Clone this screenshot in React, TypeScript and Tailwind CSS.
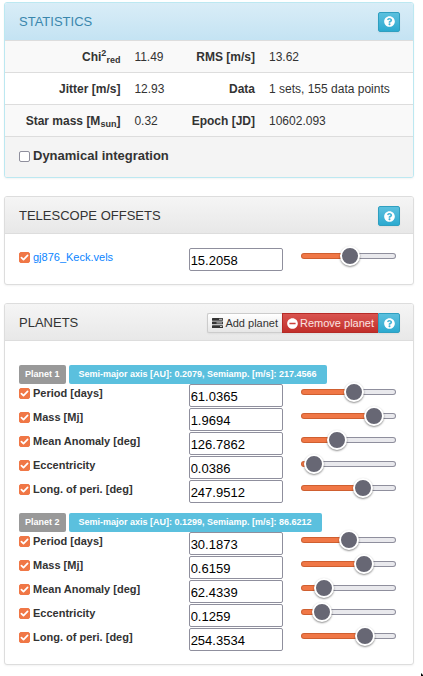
import { useState } from "react";
import type { ReactNode } from "react";
import { FaMinusCircle, FaQuestionCircle } from "react-icons/fa";

type Param = { id: string; label: string; value: string; slider: number };
type Planet = { name: string; summary: string; params: Param[] };

const PLANETS: Planet[] = [
  {
    name: "Planet 1",
    summary: "Semi-major axis [AU]: 0.2079, Semiamp. [m/s]: 217.4566",
    params: [
      { id: "p1-period", label: "Period [days]", value: "61.0365", slider: 57 },
      { id: "p1-mass", label: "Mass [Mj]", value: "1.9694", slider: 85 },
      { id: "p1-anomaly", label: "Mean Anomaly [deg]", value: "126.7862", slider: 35 },
      { id: "p1-ecc", label: "Eccentricity", value: "0.0386", slider: 3 },
      { id: "p1-long", label: "Long. of peri. [deg]", value: "247.9512", slider: 70 },
    ],
  },
  {
    name: "Planet 2",
    summary: "Semi-major axis [AU]: 0.1299, Semiamp. [m/s]: 86.6212",
    params: [
      { id: "p2-period", label: "Period [days]", value: "30.1873", slider: 51 },
      { id: "p2-mass", label: "Mass [Mj]", value: "0.6159", slider: 71 },
      { id: "p2-anomaly", label: "Mean Anomaly [deg]", value: "62.4339", slider: 17 },
      { id: "p2-ecc", label: "Eccentricity", value: "0.1259", slider: 14 },
      { id: "p2-long", label: "Long. of peri. [deg]", value: "254.3534", slider: 72 },
    ],
  },
];

function HelpButton({ label, grouped }: { label: string; grouped?: boolean }) {
  return (
    <button
      type="button"
      aria-label={label}
      className={`flex h-5 w-[22px] items-center justify-center border border-[#2f9fc0] bg-linear-to-b from-[#5bc0de] to-[#2baad0] text-white shadow-xs ${
        grouped ? "rounded-r-[2px]" : "rounded-[2px]"
      }`}
    >
      <FaQuestionCircle className="size-[11px]" />
    </button>
  );
}

function Panel({
  title,
  actions,
  info,
  children,
}: {
  title: string;
  actions: ReactNode;
  info?: boolean;
  children: ReactNode;
}) {
  return (
    <section
      className={`overflow-hidden rounded-[3px] border bg-white shadow-xs ${
        info ? "border-[#bce8f1]" : "border-[#dddddd]"
      }`}
    >
      <header
        className={`flex items-center justify-between border-b border-[#dddddd] bg-linear-to-b pr-[13px] pl-[14px] ${
          info
            ? "h-[38px] from-[#d9edf7] to-[#c4e3f3] text-[#3a87ad]"
            : "h-[37px] from-[#f5f5f5] to-[#e8e8e8] pt-[2px] text-[#333333]"
        }`}
      >
        <h2 className="text-[13px] leading-5">{title}</h2>
        <div className="flex">{actions}</div>
      </header>
      {children}
    </section>
  );
}

function CheckBox({ id, checked: initial }: { id: string; checked?: boolean }) {
  const [checked, setChecked] = useState(Boolean(initial));
  return (
    <span className="grid size-[11px] shrink-0">
      <input
        id={id}
        type="checkbox"
        checked={checked}
        onChange={(e) => setChecked(e.target.checked)}
        className="peer col-start-1 row-start-1 size-[11px] appearance-none rounded-[2px] border border-[#8f8f9d] bg-white checked:border-[#f07746] checked:bg-[#f07746]"
      />
      <svg
        viewBox="0 0 11 11"
        className="pointer-events-none invisible col-start-1 row-start-1 size-[11px] peer-checked:visible"
        aria-hidden="true"
      >
        <path
          d="M2.4 5.6 4.5 7.7 8.6 3.3"
          fill="none"
          stroke="white"
          strokeWidth="1.7"
          strokeLinecap="round"
          strokeLinejoin="round"
        />
      </svg>
    </span>
  );
}

function Slider({ label, initial }: { label: string; initial: number }) {
  const [value, setValue] = useState(initial);
  const stop = `calc(10px + (100% - 20px) * ${value / 100})`;
  return (
    <input
      type="range"
      aria-label={label}
      min={0}
      max={100}
      value={value}
      onChange={(e) => setValue(Number(e.target.value))}
      style={{
        background: `linear-gradient(to right, #f07746 ${stop}, #e9e9ed ${stop}) padding-box, linear-gradient(to right, #cf5f30 ${stop}, #8f8f9d ${stop}) border-box`,
      }}
      className="mt-[5px] block h-[6px] w-full appearance-none rounded-[3px] border border-transparent [&::-webkit-slider-thumb]:size-5 [&::-webkit-slider-thumb]:appearance-none [&::-webkit-slider-thumb]:rounded-full [&::-webkit-slider-thumb]:border-2 [&::-webkit-slider-thumb]:border-white [&::-webkit-slider-thumb]:bg-[#676774] [&::-webkit-slider-thumb]:shadow-[0_1px_2px_rgba(0,0,0,0.45)]"
    />
  );
}

function ParamRow({ param, link }: { param: Param; link?: boolean }) {
  return (
    <div className="grid h-6 grid-cols-[45%_25%_1fr]">
      <div className="flex h-[18px] items-center gap-[3px]">
        <CheckBox id={`${param.id}-on`} checked />
        {link ? (
          <a href="#data" className="text-[11px] text-[#0a84ff]">
            {param.label}
          </a>
        ) : (
          <label htmlFor={`${param.id}-on`} className="text-[11px] font-bold">
            {param.label}
          </label>
        )}
      </div>
      <input
        type="text"
        aria-label={`${param.label} value`}
        defaultValue={param.value}
        className="h-[23px] w-full min-w-0 rounded-[2px] border border-[#8f8f9d] bg-white px-px pt-[2px] text-[13px] text-black"
      />
      <div className="pl-[18px]">
        <Slider label={`${param.label} slider`} initial={param.slider} />
      </div>
    </div>
  );
}

function TasksIcon() {
  return (
    <svg viewBox="0 0 11 10" className="h-[10px] w-[11px] text-[#333333]" aria-hidden="true">
      <rect x="0" y="0" width="11" height="2.7" rx="0.5" fill="currentColor" />
      <rect x="0" y="3.6" width="11" height="2.7" rx="0.5" fill="currentColor" />
      <rect x="0" y="7.2" width="11" height="2.7" rx="0.5" fill="currentColor" />
      <path d="M7 1.3h3.2M4.5 4.9h5.7M8 8.5h2.2" stroke="#d8d8d8" strokeWidth="0.9" />
    </svg>
  );
}

const TH = "border-b border-[#dddddd] px-[7px] text-right font-bold whitespace-nowrap";
const TD = "border-b border-[#dddddd] px-[7px] whitespace-nowrap";

export default function App() {
  return (
    <main className="relative flex min-h-screen flex-col gap-[18px] overflow-hidden bg-white pt-[2px] pr-[9px] pb-[11px] pl-1 font-['Liberation_Sans',Arial,sans-serif] text-[12px] text-[#333333]">
      <Panel title="STATISTICS" info actions={<HelpButton label="Statistics help" />}>
        <table className="w-full table-fixed border-separate border-spacing-0">
          <colgroup>
            <col className="w-[30%]" />
            <col className="w-[14%]" />
            <col className="w-[19%]" />
            <col />
          </colgroup>
          <tbody>
            <tr className="h-8 bg-[#f9f9f9]">
              <th scope="row" className={TH}>
                Chi<sup>2</sup>
                <sub>red</sub>
              </th>
              <td className={TD}>11.49</td>
              <th scope="row" className={TH}>
                RMS [m/s]
              </th>
              <td className={TD}>13.62</td>
            </tr>
            <tr className="h-8 bg-white">
              <th scope="row" className={TH}>
                Jitter [m/s]
              </th>
              <td className={TD}>12.93</td>
              <th scope="row" className={TH}>
                Data
              </th>
              <td className={TD}>1 sets, 155 data points</td>
            </tr>
            <tr className="h-8 bg-[#f9f9f9]">
              <th scope="row" className={TH}>
                Star mass [M<sub>sun</sub>]
              </th>
              <td className={TD}>0.32</td>
              <th scope="row" className={TH}>
                Epoch [JD]
              </th>
              <td className={TD}>10602.093</td>
            </tr>
          </tbody>
        </table>
        <div className="flex h-10 items-center gap-[3px] bg-[#f4f4f4] pb-[2px] pl-[14px]">
          <CheckBox id="dynamical" />
          <label htmlFor="dynamical" className="text-[13px] font-bold">
            Dynamical integration
          </label>
        </div>
      </Panel>

      <Panel title="TELESCOPE OFFSETS" actions={<HelpButton label="Offsets help" />}>
        <div className="pt-[14px] pr-[17px] pb-3 pl-[14px]">
          <ParamRow
            link
            param={{ id: "keck", label: "gj876_Keck.vels", value: "15.2058", slider: 52 }}
          />
        </div>
      </Panel>

      <Panel
        title="PLANETS"
        actions={
          <>
            <button
              type="button"
              className="flex h-5 items-center gap-[2px] rounded-l-[2px] border border-r-0 border-[#cccccc] bg-linear-to-b from-white to-[#e6e6e6] px-1 text-[11px] whitespace-nowrap shadow-xs"
            >
              <TasksIcon />
              Add planet
            </button>
            <button
              type="button"
              className="flex h-5 items-center gap-[2px] border border-r-0 border-[#b52b27] bg-linear-to-b from-[#d9534f] to-[#c12e2a] px-1 text-[11px] whitespace-nowrap text-[#fbe3e2] shadow-xs"
            >
              <FaMinusCircle className="size-[11px] text-white" />
              Remove planet
            </button>
            <HelpButton label="Planets help" grouped />
          </>
        }
      >
        <div className="flex flex-col gap-[9px] pt-6 pr-[17px] pb-3 pl-[14px]">
          {PLANETS.map((planet) => (
            <section key={planet.name}>
              <div className="flex h-[19px] gap-[3px] text-[9px] leading-[19px] font-bold whitespace-nowrap text-white">
                <h3 className="rounded-[2px] bg-[#999999] px-[6px]">{planet.name}</h3>
                <p className="rounded-[2px] bg-[#5bc0de] px-[10px]">{planet.summary}</p>
              </div>
              {planet.params.map((param) => (
                <ParamRow key={param.id} param={param} />
              ))}
            </section>
          ))}
        </div>
      </Panel>

      <svg
        viewBox="0 0 2 3"
        className="absolute right-0 bottom-0 h-[3px] w-[2px]"
        aria-hidden="true"
      >
        <path d="M0 0 2 2V3H0Z" fill="black" />
      </svg>
    </main>
  );
}
